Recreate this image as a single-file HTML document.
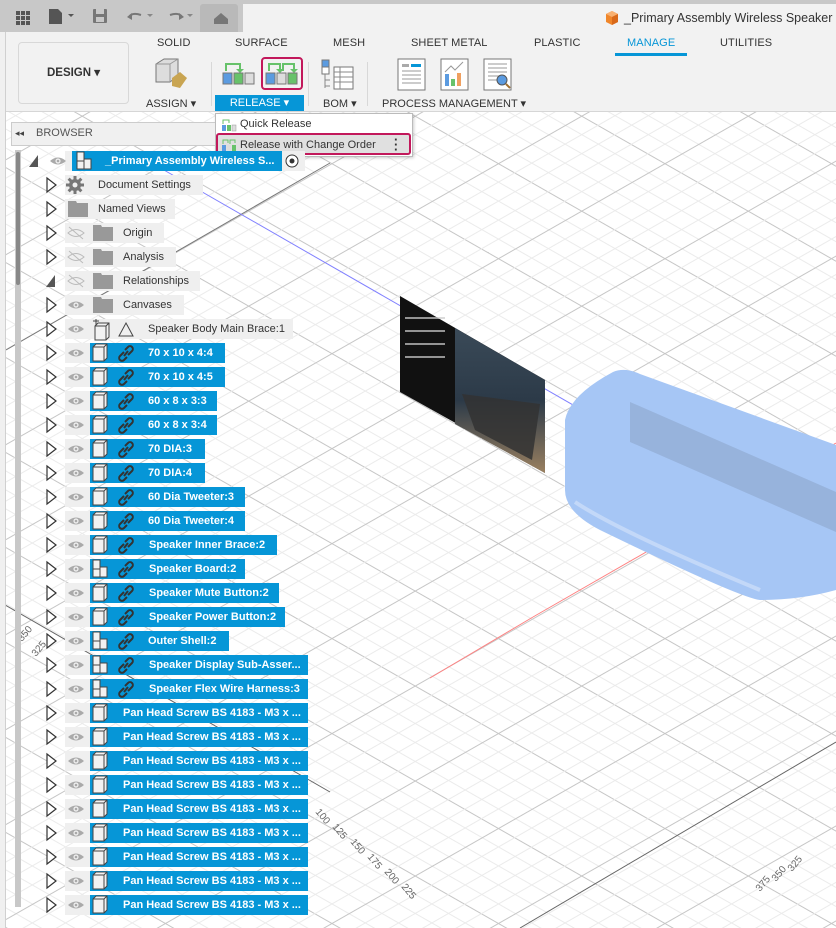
<!DOCTYPE html>
<html><head><meta charset="utf-8"><style>
*{margin:0;padding:0;box-sizing:border-box}
body{width:836px;height:928px;overflow:hidden;position:relative;background:#fff;font-family:"Liberation Sans",Arial,sans-serif;font-size:11px;color:#333}
.abs{position:absolute}
.top{left:0;top:0;width:836px;height:32px;background:#c8c8c8}
.tab{left:243px;top:4px;width:593px;height:28px;background:#f2f2f2}
.tb{left:0;top:32px;width:836px;height:80px;background:#f2f2f2;border-bottom:1px solid #d6d6d6}
.tabn{top:37px;font-size:11px;color:#333;letter-spacing:.1px}
.row{position:absolute;height:20px;line-height:20px;white-space:nowrap;overflow:hidden}
.g{background:#efefef}
.b{background:#0696d7;color:#fff;font-weight:bold}
</style></head><body>
<svg class="abs" style="left:0;top:112px" width="836" height="816">
<defs>
<pattern id="p1" width="2000" height="82.5" patternUnits="userSpaceOnUse" patternTransform="translate(665,526) rotate(29.7)">
<line x1="0" y1="0.5" x2="2000" y2="0.5" stroke="#c6c6c6" stroke-width="1"/>
<line x1="0" y1="16.5" x2="2000" y2="16.5" stroke="#ebebeb"/>
<line x1="0" y1="33" x2="2000" y2="33" stroke="#ebebeb"/>
<line x1="0" y1="49.5" x2="2000" y2="49.5" stroke="#ebebeb"/>
<line x1="0" y1="66" x2="2000" y2="66" stroke="#ebebeb"/>
</pattern>
<pattern id="p2" width="2000" height="82.5" patternUnits="userSpaceOnUse" patternTransform="translate(665,526) rotate(-29.7)">
<line x1="0" y1="0.5" x2="2000" y2="0.5" stroke="#c6c6c6" stroke-width="1"/>
<line x1="0" y1="16.5" x2="2000" y2="16.5" stroke="#ebebeb"/>
<line x1="0" y1="33" x2="2000" y2="33" stroke="#ebebeb"/>
<line x1="0" y1="49.5" x2="2000" y2="49.5" stroke="#ebebeb"/>
<line x1="0" y1="66" x2="2000" y2="66" stroke="#ebebeb"/>
</pattern>
<linearGradient id="ph" x1="0" y1="0" x2="0" y2="1"><stop offset="0" stop-color="#3a4a58"/><stop offset=".5" stop-color="#2c3a48"/><stop offset="1" stop-color="#9a8060"/></linearGradient>
</defs>
<rect width="836" height="816" fill="url(#p1)"/>
<rect width="836" height="816" fill="url(#p2)"/>
<line x1="6" y1="238" x2="330" y2="51" stroke="#777" stroke-width="1"/>
<line x1="0" y1="490" x2="330" y2="680" stroke="#666"/>
<line x1="520" y1="816" x2="836" y2="630" stroke="#666"/>
<line x1="150" y1="50" x2="836" y2="444" stroke="#8080ff"/>
<line x1="533" y1="505" x2="836" y2="331" stroke="#ff8080"/>
<line x1="533" y1="505" x2="430" y2="566" stroke="#ff8080"/>
<g font-size="10" fill="#666">
<text x="22" y="530" transform="rotate(-50 22 530)">350</text>
<text x="36" y="545" transform="rotate(-50 36 545)">325</text>
<text x="315" y="700" transform="rotate(50 315 700)">100</text>
<text x="332" y="715" transform="rotate(50 332 715)">125</text>
<text x="350" y="730" transform="rotate(50 350 730)">150</text>
<text x="367" y="745" transform="rotate(50 367 745)">175</text>
<text x="384" y="760" transform="rotate(50 384 760)">200</text>
<text x="401" y="775" transform="rotate(50 401 775)">225</text>
<text x="760" y="780" transform="rotate(-50 760 780)">375</text>
<text x="776" y="770" transform="rotate(-50 776 770)">350</text>
<text x="792" y="760" transform="rotate(-50 792 760)">325</text>
</g>
<polygon points="400,184 545,268 545,361 400,280" fill="#111"/>
<polygon points="455,216 545,268 545,361 455,312" fill="url(#ph)"/>
<polygon points="462,282 540,292 532,348 475,318" fill="#333" opacity=".85"/>
<g fill="#ccc" opacity=".7"><rect x="405" y="205" width="40" height="2"/><rect x="405" y="218" width="40" height="2"/><rect x="405" y="231" width="40" height="2"/><rect x="405" y="244" width="40" height="2"/></g>
<path d="M613,260 Q625,255 640,262 L836,333 V478 Q800,488 760,488 Q740,486 600,418 Q565,400 565,378 V308 Q570,283 613,260Z" fill="#a6c6f5"/>
<path d="M630,290 L836,380 V420 L630,330Z" fill="#93aed6" opacity=".8"/>
<path d="M575,390 Q620,420 760,478" stroke="#c3d8f8" fill="none" stroke-width="4"/>
</svg>

<div class="abs top"></div>
<div class="abs" style="left:200px;top:4px;width:38px;height:28px;background:#b9b9b9;border-radius:3px 3px 0 0"></div>
<div class="abs tab"></div>
<svg class="abs" style="left:0;top:0" width="240" height="32">
<g fill="#555"><rect x="16" y="11" width="4" height="4"/><rect x="21" y="11" width="4" height="4"/><rect x="26" y="11" width="4" height="4"/><rect x="16" y="16" width="4" height="4"/><rect x="21" y="16" width="4" height="4"/><rect x="26" y="16" width="4" height="4"/><rect x="16" y="21" width="4" height="4"/><rect x="21" y="21" width="4" height="4"/><rect x="26" y="21" width="4" height="4"/></g>
<path d="M49,9 H58 L62,13 V24 H49Z" fill="#555"/><path d="M68,14 h6 l-3,3z" fill="#555"/>
<rect x="93" y="9" width="14" height="14" rx="1" fill="#777"/><rect x="96" y="9" width="8" height="5" fill="#c8c8c8"/><rect x="96" y="17" width="8" height="5" fill="#c8c8c8"/>
<path d="M129,17 q3,-5 12,-2" stroke="#777" stroke-width="2" fill="none"/><path d="M127,17 l5,-4 v7z" fill="#777"/><path d="M147,14 h6 l-3,3z" fill="#888"/>
<path d="M170,15 q9,-3 12,2" stroke="#777" stroke-width="2" fill="none"/><path d="M184,17 l-5,-4 v7z" fill="#777"/><path d="M187,14 h6 l-3,3z" fill="#888"/>
<path d="M214,19 l7,-6 l7,6 v5 h-14z" fill="#777"/>
</svg>
<svg class="abs" style="left:604px;top:10px" width="16" height="16"><path d="M8,1 L14,4 V12 L8,15 L2,12 V4Z" fill="#f0862a"/><path d="M8,1 L14,4 L8,7 L2,4Z" fill="#f8b070"/><path d="M8,7 V15 L14,12 V4Z" fill="#d9691a"/></svg>
<div class="abs" style="left:624px;top:11px;font-size:12.5px;color:#333">_Primary Assembly Wireless Speaker</div>

<div class="abs tb"></div>
<div class="abs" style="left:0;top:32px;width:6px;height:896px;background:#f0f0f0;border-right:1px solid #d0d0d0"></div>
<div class="abs" style="left:18px;top:42px;width:111px;height:62px;border:1px solid #d8d8d8;border-radius:4px;background:#f2f2f2;font-weight:bold;font-size:11.5px;line-height:60px;text-align:center;color:#333">DESIGN ▾</div>
<div class="abs tabn" style="left:157px">SOLID</div>
<div class="abs tabn" style="left:235px">SURFACE</div>
<div class="abs tabn" style="left:333px">MESH</div>
<div class="abs tabn" style="left:411px">SHEET METAL</div>
<div class="abs tabn" style="left:534px">PLASTIC</div>
<div class="abs tabn" style="left:627px;color:#0696d7">MANAGE</div>
<div class="abs" style="left:615px;top:53px;width:72px;height:3px;background:#0696d7"></div>
<div class="abs tabn" style="left:720px">UTILITIES</div>
<div class="abs" style="left:211px;top:62px;width:1px;height:44px;background:#d8d8d8"></div>
<div class="abs" style="left:308px;top:62px;width:1px;height:44px;background:#d8d8d8"></div>
<div class="abs" style="left:367px;top:62px;width:1px;height:44px;background:#d8d8d8"></div>
<svg class="abs" style="left:150px;top:56px" width="40" height="36"><path d="M6,8 L14,3 H28 V20 L20,26 H6Z" fill="#ddd" stroke="#777"/><path d="M6,8 H20 V26" stroke="#999" fill="none"/><path d="M20,8 L28,3" stroke="#999"/><path d="M22,22 L30,16 L37,22 L30,32 L22,30Z" fill="#c9a552"/></svg>
<div class="abs" style="left:146px;top:97px;font-size:11px">ASSIGN ▾</div>
<svg class="abs" style="left:222px;top:60px" width="34" height="26"><path d="M4,11 V4 H18 V10" stroke="#67c26a" stroke-width="2" fill="none"/><path d="M14,9 h8 l-4,4z" fill="#67c26a"/><rect x="1" y="13" width="9" height="11" fill="#5b9be0" stroke="#777"/><rect x="12" y="13" width="9" height="11" fill="#67c26a" stroke="#777"/><rect x="23" y="13" width="9" height="11" fill="#ddd" stroke="#777"/></svg>
<div class="abs" style="left:261px;top:57px;width:42px;height:33px;border:2px solid #c2185b;border-radius:4px"></div>
<svg class="abs" style="left:265px;top:60px" width="34" height="26"><path d="M4,11 V4 H15 V10 M18,11 V4 H29 V10" stroke="#67c26a" stroke-width="2" fill="none"/><path d="M11,9 h8 l-4,4z M25,9 h8 l-4,4z" fill="#67c26a"/><rect x="1" y="13" width="9" height="11" fill="#5b9be0" stroke="#777"/><rect x="12" y="13" width="9" height="11" fill="#ddd" stroke="#777"/><rect x="23" y="13" width="9" height="11" fill="#67c26a" stroke="#777"/></svg>
<div class="abs" style="left:215px;top:95px;width:89px;height:16px;background:#0696d7;color:#fff;text-align:center;line-height:16px">RELEASE ▾</div>
<svg class="abs" style="left:320px;top:58px" width="36" height="34"><rect x="2" y="2" width="7" height="7" fill="#5b9be0" stroke="#777"/><rect x="2" y="9" width="7" height="7" fill="#fff" stroke="#777"/><path d="M5,16 V30 M5,22 H10 M5,28 H10" stroke="#888"/><rect x="14" y="9" width="19" height="22" fill="#fff" stroke="#777"/><path d="M14,14 H33 M14,19 H33 M14,24 H33 M20,9 V31" stroke="#888"/></svg>
<div class="abs" style="left:323px;top:97px">BOM ▾</div>
<svg class="abs" style="left:397px;top:58px" width="120" height="34"><rect x="1" y="1" width="27" height="31" fill="#fff" stroke="#777"/><rect x="5" y="6" width="7" height="3" fill="#aaa"/><rect x="14" y="6" width="10" height="3" fill="#0696d7"/><path d="M5,13 H24 M5,17 H24 M5,21 H24 M5,25 H24" stroke="#999"/><rect x="44" y="1" width="27" height="31" fill="#fff" stroke="#777"/><path d="M48,14 L54,8 L58,12 L66,4" stroke="#999" fill="none"/><rect x="48" y="16" width="4" height="12" fill="#5b9be0"/><rect x="54" y="21" width="4" height="7" fill="#67c26a"/><rect x="60" y="15" width="4" height="13" fill="#f0a060"/><rect x="87" y="1" width="27" height="31" fill="#fff" stroke="#777"/><path d="M91,6 H110 M91,10 H110 M91,14 H110 M91,18 H102 M91,22 H100" stroke="#999"/><circle cx="105" cy="22" r="5" fill="#5b9be0" stroke="#555"/><path d="M109,26 L113,30" stroke="#a07030" stroke-width="2"/></svg>
<div class="abs" style="left:382px;top:97px">PROCESS MANAGEMENT ▾</div>

<div class="abs" style="left:215px;top:113px;width:198px;height:44px;background:#fff;border:1px solid #bbb;box-shadow:1px 1px 3px rgba(0,0,0,.2)"></div>
<svg class="abs" style="left:221px;top:118px" width="16" height="14"><path d="M2,6 V2 H8 V5" stroke="#67c26a" fill="none"/><rect x="1" y="7" width="4" height="6" fill="#5b9be0"/><rect x="6" y="7" width="4" height="6" fill="#67c26a"/><rect x="11" y="7" width="4" height="6" fill="#ddd" stroke="#999" stroke-width=".5"/></svg>
<div class="abs" style="left:240px;top:118px;font-size:11px">Quick Release</div>
<div class="abs" style="left:216px;top:133px;width:195px;height:22px;background:#e0e0e0;border:2px solid #c2185b;border-radius:3px"></div>
<svg class="abs" style="left:221px;top:138px" width="16" height="14"><path d="M2,6 V2 H7 V5 M9,6 V2 H14 V5" stroke="#67c26a" fill="none"/><rect x="1" y="7" width="4" height="6" fill="#5b9be0"/><rect x="6" y="7" width="4" height="6" fill="#ddd"/><rect x="11" y="7" width="4" height="6" fill="#67c26a"/></svg>
<div class="abs" style="left:240px;top:139px;font-size:11px">Release with Change Order</div>
<div class="abs" style="left:394px;top:137px;font-weight:bold;font-size:13px;line-height:5px">·<br>·<br>·</div>

<div class="abs" style="left:11px;top:122px;width:204px;height:24px;background:#f0f0f0;border:1px solid #ccc;border-right:none"></div>
<div class="abs" style="left:15px;top:128px;font-size:9px;color:#444">◂◂</div>
<div class="abs" style="left:36px;top:127px;color:#555">BROWSER</div>
<div class="abs" style="left:15px;top:150px;width:6px;height:757px;background:#c8c8c8"></div>
<div class="abs" style="left:16px;top:152px;width:4px;height:133px;background:#888;border-radius:2px"></div>

<div class="row g" style="left:65px;top:151px;width:240px"></div>
<div class="row b" style="left:72px;top:151px;width:210px;padding-left:33px">_Primary Assembly Wireless S...</div>
<div class="row g" style="left:65px;top:175px;width:138px;padding-left:33px">Document Settings</div>
<div class="row g" style="left:65px;top:199px;width:110px;padding-left:33px">Named Views</div>
<div class="row g" style="left:65px;top:223px;width:99px;padding-left:58px">Origin</div>
<div class="row g" style="left:65px;top:247px;width:111px;padding-left:58px">Analysis</div>
<div class="row g" style="left:65px;top:271px;width:135px;padding-left:58px">Relationships</div>
<div class="row g" style="left:65px;top:295px;width:119px;padding-left:58px">Canvases</div>
<div class="row g" style="left:65px;top:319px;width:228px;padding-left:83px">Speaker Body Main Brace:1</div>

<div class="row g" style="left:65px;top:343px;width:30px"></div><div class="row b" style="left:90px;top:343px;width:135px;padding-left:58px">70 x 10 x 4:4</div>
<div class="row g" style="left:65px;top:367px;width:30px"></div><div class="row b" style="left:90px;top:367px;width:135px;padding-left:58px">70 x 10 x 4:5</div>
<div class="row g" style="left:65px;top:391px;width:30px"></div><div class="row b" style="left:90px;top:391px;width:127px;padding-left:58px">60 x 8 x 3:3</div>
<div class="row g" style="left:65px;top:415px;width:30px"></div><div class="row b" style="left:90px;top:415px;width:127px;padding-left:58px">60 x 8 x 3:4</div>
<div class="row g" style="left:65px;top:439px;width:30px"></div><div class="row b" style="left:90px;top:439px;width:115px;padding-left:58px">70 DIA:3</div>
<div class="row g" style="left:65px;top:463px;width:30px"></div><div class="row b" style="left:90px;top:463px;width:115px;padding-left:58px">70 DIA:4</div>
<div class="row g" style="left:65px;top:487px;width:30px"></div><div class="row b" style="left:90px;top:487px;width:155px;padding-left:58px">60 Dia Tweeter:3</div>
<div class="row g" style="left:65px;top:511px;width:30px"></div><div class="row b" style="left:90px;top:511px;width:155px;padding-left:58px">60 Dia Tweeter:4</div>
<div class="row g" style="left:65px;top:535px;width:30px"></div><div class="row b" style="left:90px;top:535px;width:187px;padding-left:59px">Speaker Inner Brace:2</div>
<div class="row g" style="left:65px;top:559px;width:30px"></div><div class="row b" style="left:90px;top:559px;width:155px;padding-left:59px">Speaker Board:2</div>
<div class="row g" style="left:65px;top:583px;width:30px"></div><div class="row b" style="left:90px;top:583px;width:189px;padding-left:59px">Speaker Mute Button:2</div>
<div class="row g" style="left:65px;top:607px;width:30px"></div><div class="row b" style="left:90px;top:607px;width:195px;padding-left:59px">Speaker Power Button:2</div>
<div class="row g" style="left:65px;top:631px;width:30px"></div><div class="row b" style="left:90px;top:631px;width:139px;padding-left:58px">Outer Shell:2</div>
<div class="row g" style="left:65px;top:655px;width:30px"></div><div class="row b" style="left:90px;top:655px;width:218px;padding-left:59px">Speaker Display Sub-Asser...</div>
<div class="row g" style="left:65px;top:679px;width:30px"></div><div class="row b" style="left:90px;top:679px;width:218px;padding-left:59px">Speaker Flex Wire Harness:3</div>
<div class="row g" style="left:65px;top:703px;width:30px"></div><div class="row b" style="left:90px;top:703px;width:218px;padding-left:33px">Pan Head Screw BS 4183 - M3 x ...</div>
<div class="row g" style="left:65px;top:727px;width:30px"></div><div class="row b" style="left:90px;top:727px;width:218px;padding-left:33px">Pan Head Screw BS 4183 - M3 x ...</div>
<div class="row g" style="left:65px;top:751px;width:30px"></div><div class="row b" style="left:90px;top:751px;width:218px;padding-left:33px">Pan Head Screw BS 4183 - M3 x ...</div>
<div class="row g" style="left:65px;top:775px;width:30px"></div><div class="row b" style="left:90px;top:775px;width:218px;padding-left:33px">Pan Head Screw BS 4183 - M3 x ...</div>
<div class="row g" style="left:65px;top:799px;width:30px"></div><div class="row b" style="left:90px;top:799px;width:218px;padding-left:33px">Pan Head Screw BS 4183 - M3 x ...</div>
<div class="row g" style="left:65px;top:823px;width:30px"></div><div class="row b" style="left:90px;top:823px;width:218px;padding-left:33px">Pan Head Screw BS 4183 - M3 x ...</div>
<div class="row g" style="left:65px;top:847px;width:30px"></div><div class="row b" style="left:90px;top:847px;width:218px;padding-left:33px">Pan Head Screw BS 4183 - M3 x ...</div>
<div class="row g" style="left:65px;top:871px;width:30px"></div><div class="row b" style="left:90px;top:871px;width:218px;padding-left:33px">Pan Head Screw BS 4183 - M3 x ...</div>
<div class="row g" style="left:65px;top:895px;width:30px"></div><div class="row b" style="left:90px;top:895px;width:218px;padding-left:33px">Pan Head Screw BS 4183 - M3 x ...</div>

<svg class="abs" style="left:0;top:0" width="330" height="928">
<defs>
<path id="tri2" d="M0,0 L9,7 L0,14Z" fill="#fff" stroke="#333" stroke-width="1.2"/>
<g id="eye2"><path d="M-8,0 Q0,-7 8,0 Q0,7 -8,0Z" fill="#aaa"/><circle r="2.6" fill="#efefef"/><circle r="1.3" fill="#aaa"/></g>
<g id="eyex"><path d="M-8,0 Q0,-7 8,0 Q0,7 -8,0Z" fill="none" stroke="#bbb"/><path d="M-7,-6 L7,6" stroke="#bbb"/></g>
<g id="cube2"><path d="M0,3 L3,0 H14 V14 L11,17 H0Z" fill="#f2f2f2" stroke="#444"/><path d="M0,3 H11 V17 M11,3 L14,0" stroke="#444" fill="none"/></g>
<g id="asm2"><path d="M0,0 H7 V7 H14 V17 H0Z" fill="#f2f2f2" stroke="#444"/><path d="M7,7 V17 M0,9 H7" stroke="#444"/></g>
<g id="link2" stroke="#333" stroke-width="2" fill="none"><path d="M6,7 l-4,4 a2.5,2.5 0 0 0 4,4 l3,-3"/><path d="M10,10 l4,-4 a2.5,2.5 0 0 0 -4,-4 l-3,3"/><path d="M6,11 L10,6"/></g>
<g id="fold2"><path d="M0,0 H8 L9,2 H20 V16 H0Z" fill="#999"/></g>
</defs>
<path d="M29,167 L38,155 V167Z" fill="#555"/>
<use href="#eye2" x="58" y="161"/>
<use href="#asm2" x="77" y="152"/>
<circle cx="292" cy="161" r="6" fill="#fff" stroke="#333"/><circle cx="292" cy="161" r="2.5" fill="#333"/>
<use href="#tri2" x="47" y="178"/>
<g transform="translate(75,185)" fill="#777"><circle r="6"/><path d="M-1.5,-9 h3 v18 h-3z M-9,-1.5 v3 h18 v-3z" /><path d="M-1.5,-9 h3 v18 h-3z" transform="rotate(45)"/><path d="M-1.5,-9 h3 v18 h-3z" transform="rotate(-45)"/><circle r="2.5" fill="#efefef"/></g>
<use href="#tri2" x="47" y="202"/><use href="#fold2" x="68" y="201"/>
<use href="#tri2" x="47" y="226"/><use href="#eyex" x="76" y="233"/><use href="#fold2" x="93" y="225"/>
<use href="#tri2" x="47" y="250"/><use href="#eyex" x="76" y="257"/><use href="#fold2" x="93" y="249"/>
<path d="M46,287 L55,275 V287Z" fill="#555"/><use href="#eyex" x="76" y="281"/><use href="#fold2" x="93" y="273"/>
<use href="#tri2" x="47" y="298"/><use href="#eye2" x="76" y="305"/><use href="#fold2" x="93" y="297"/>
<use href="#tri2" x="47" y="322"/><use href="#eye2" x="76" y="329"/><use href="#cube2" x="95" y="323"/><path d="M96,319 v6 M93,321 h6" stroke="#444"/><path d="M119,336 L126,323 L133,336Z" fill="none" stroke="#444"/>
<g>
<use href="#tri2" x="47" y="346"/><use href="#eye2" x="76" y="353"/><use href="#cube2" x="93" y="344"/><use href="#link2" x="118" y="345"/>
<use href="#tri2" x="47" y="370"/><use href="#eye2" x="76" y="377"/><use href="#cube2" x="93" y="368"/><use href="#link2" x="118" y="369"/>
<use href="#tri2" x="47" y="394"/><use href="#eye2" x="76" y="401"/><use href="#cube2" x="93" y="392"/><use href="#link2" x="118" y="393"/>
<use href="#tri2" x="47" y="418"/><use href="#eye2" x="76" y="425"/><use href="#cube2" x="93" y="416"/><use href="#link2" x="118" y="417"/>
<use href="#tri2" x="47" y="442"/><use href="#eye2" x="76" y="449"/><use href="#cube2" x="93" y="440"/><use href="#link2" x="118" y="441"/>
<use href="#tri2" x="47" y="466"/><use href="#eye2" x="76" y="473"/><use href="#cube2" x="93" y="464"/><use href="#link2" x="118" y="465"/>
<use href="#tri2" x="47" y="490"/><use href="#eye2" x="76" y="497"/><use href="#cube2" x="93" y="488"/><use href="#link2" x="118" y="489"/>
<use href="#tri2" x="47" y="514"/><use href="#eye2" x="76" y="521"/><use href="#cube2" x="93" y="512"/><use href="#link2" x="118" y="513"/>
<use href="#tri2" x="47" y="538"/><use href="#eye2" x="76" y="545"/><use href="#cube2" x="93" y="536"/><use href="#link2" x="118" y="537"/>
<use href="#tri2" x="47" y="562"/><use href="#eye2" x="76" y="569"/><use href="#asm2" x="93" y="560"/><use href="#link2" x="118" y="561"/>
<use href="#tri2" x="47" y="586"/><use href="#eye2" x="76" y="593"/><use href="#cube2" x="93" y="584"/><use href="#link2" x="118" y="585"/>
<use href="#tri2" x="47" y="610"/><use href="#eye2" x="76" y="617"/><use href="#cube2" x="93" y="608"/><use href="#link2" x="118" y="609"/>
<use href="#tri2" x="47" y="634"/><use href="#eye2" x="76" y="641"/><use href="#asm2" x="93" y="632"/><use href="#link2" x="118" y="633"/>
<use href="#tri2" x="47" y="658"/><use href="#eye2" x="76" y="665"/><use href="#asm2" x="93" y="656"/><use href="#link2" x="118" y="657"/>
<use href="#tri2" x="47" y="682"/><use href="#eye2" x="76" y="689"/><use href="#asm2" x="93" y="680"/><use href="#link2" x="118" y="681"/>
<use href="#tri2" x="47" y="706"/><use href="#eye2" x="76" y="713"/><use href="#cube2" x="93" y="704"/>
<use href="#tri2" x="47" y="730"/><use href="#eye2" x="76" y="737"/><use href="#cube2" x="93" y="728"/>
<use href="#tri2" x="47" y="754"/><use href="#eye2" x="76" y="761"/><use href="#cube2" x="93" y="752"/>
<use href="#tri2" x="47" y="778"/><use href="#eye2" x="76" y="785"/><use href="#cube2" x="93" y="776"/>
<use href="#tri2" x="47" y="802"/><use href="#eye2" x="76" y="809"/><use href="#cube2" x="93" y="800"/>
<use href="#tri2" x="47" y="826"/><use href="#eye2" x="76" y="833"/><use href="#cube2" x="93" y="824"/>
<use href="#tri2" x="47" y="850"/><use href="#eye2" x="76" y="857"/><use href="#cube2" x="93" y="848"/>
<use href="#tri2" x="47" y="874"/><use href="#eye2" x="76" y="881"/><use href="#cube2" x="93" y="872"/>
<use href="#tri2" x="47" y="898"/><use href="#eye2" x="76" y="905"/><use href="#cube2" x="93" y="896"/>
</g>
</svg>
</body></html>
